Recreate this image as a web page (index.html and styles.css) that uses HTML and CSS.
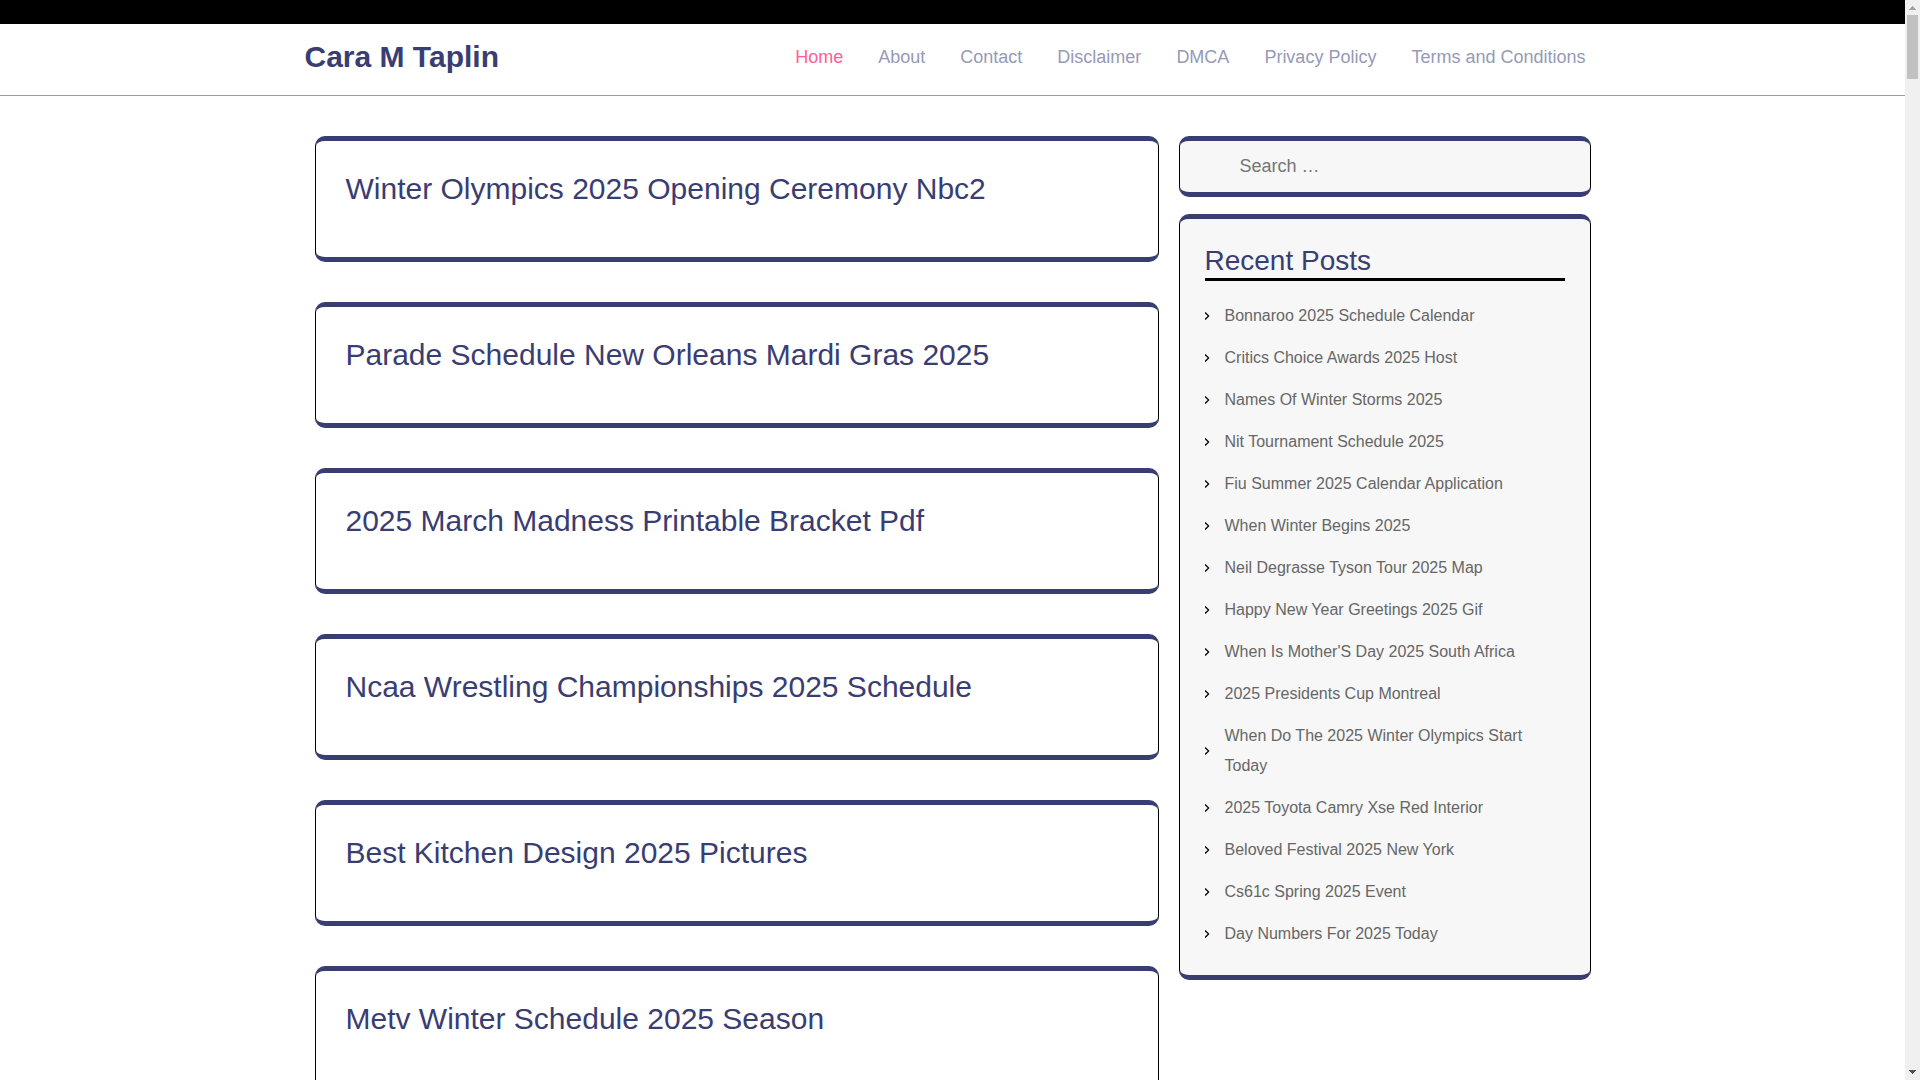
FILE: index.html
```html
<!DOCTYPE html>
<html lang="en">
<head>
    <meta charset="UTF-8">
    <meta name="viewport" content="width=device-width, initial-scale=1.0">
    <title>Cara M Taplin</title>
    <link rel="stylesheet" href="styles.css">
</head>
<body>
    <div class="page">
        <div class="topbar"></div>
        <header class="header">
            <div class="container header-inner">
                <a class="logo" href="#">Cara M Taplin</a>
                <nav class="menu">
                    <a class="active" href="#">Home</a>
                    <a href="#">About</a>
                    <a href="#">Contact</a>
                    <a href="#">Disclaimer</a>
                    <a href="#">DMCA</a>
                    <a href="#">Privacy Policy</a>
                    <a href="#">Terms and Conditions</a>
                </nav>
            </div>
        </header>
        <div class="container content">
            <main class="posts">
                <article class="box post"><h2><a href="#">Winter Olympics 2025 Opening Ceremony Nbc2</a></h2></article>
                <article class="box post"><h2><a href="#">Parade Schedule New Orleans Mardi Gras 2025</a></h2></article>
                <article class="box post"><h2><a href="#">2025 March Madness Printable Bracket Pdf</a></h2></article>
                <article class="box post"><h2><a href="#">Ncaa Wrestling Championships 2025 Schedule</a></h2></article>
                <article class="box post"><h2><a href="#">Best Kitchen Design 2025 Pictures</a></h2></article>
                <article class="box post"><h2><a href="#">Metv Winter Schedule 2025 Season</a></h2></article>
            </main>
            <aside class="sidebar">
                <form class="box search">
                    <input type="search" placeholder="Search …" aria-label="Search for:">
                </form>
                <section class="box recent">
                    <h2>Recent Posts</h2>
                    <ul>
                        <li><a href="#">Bonnaroo 2025 Schedule Calendar</a></li>
                        <li><a href="#">Critics Choice Awards 2025 Host</a></li>
                        <li><a href="#">Names Of Winter Storms 2025</a></li>
                        <li><a href="#">Nit Tournament Schedule 2025</a></li>
                        <li><a href="#">Fiu Summer 2025 Calendar Application</a></li>
                        <li><a href="#">When Winter Begins 2025</a></li>
                        <li><a href="#">Neil Degrasse Tyson Tour 2025 Map</a></li>
                        <li><a href="#">Happy New Year Greetings 2025 Gif</a></li>
                        <li><a href="#">When Is Mother'S Day 2025 South Africa</a></li>
                        <li><a href="#">2025 Presidents Cup Montreal</a></li>
                        <li><a href="#">When Do The 2025 Winter Olympics Start Today</a></li>
                        <li><a href="#">2025 Toyota Camry Xse Red Interior</a></li>
                        <li><a href="#">Beloved Festival 2025 New York</a></li>
                        <li><a href="#">Cs61c Spring 2025 Event</a></li>
                        <li><a href="#">Day Numbers For 2025 Today</a></li>
                    </ul>
                </section>
            </aside>
        </div>
    </div>
    <div class="scrollbar" aria-hidden="true">
        <svg width="15" height="15" viewBox="0 0 15 15" shape-rendering="crispEdges"><path fill="#a3a3a3" d="M7 6h1v1h1v1h1v1h1v1H4V9h1V8h1V7h1z"/></svg>
        <div class="thumb"></div>
        <svg width="15" height="15" viewBox="0 0 15 15" shape-rendering="crispEdges"><path fill="#505050" d="M4 5h7v1h-1v1H9v1H8v1H7V8H6V7H5V6H4z"/></svg>
    </div>
</body>
</html>
```

FILE: styles.css
```css
* {
    margin: 0;
    padding: 0;
    box-sizing: border-box;
}
body {
    display: flex;
    height: 100vh;
    overflow: hidden;
    font-family: "Liberation Sans", Arial, sans-serif;
    font-size: 16px;
    line-height: 30px;
    color: #666;
    background: #fff;
}
a {
    color: inherit;
    text-decoration: none;
}
.page {
    flex: 1;
    min-width: 0;
    overflow: hidden;
}
.container {
    max-width: 1320px;
    margin: 0 auto;
    padding: 0 12px;
}

/* header */
.topbar {
    height: 24px;
    background: #000;
}
.header {
    border-bottom: 1px solid #969ab6;
}
.header-inner {
    display: flex;
    justify-content: space-between;
    align-items: center;
    padding-top: 13px;
    padding-bottom: 18px;
}
.logo {
    font-size: 30px;
    line-height: 40px;
    font-weight: bold;
    color: #393d72;
}
.menu {
    display: flex;
    gap: 35px;
    padding-right: 15px;
    font-size: 18px;
    color: #969ab6;
}
.menu .active {
    color: #ff5e94;
}

/* posts and sidebar */
.content {
    display: flex;
    padding-top: 40px;
}
.box {
    border: 1px solid #000;
    border-top: 5px solid #393d72;
    border-bottom: 5px solid #393d72;
    border-radius: 10px;
}
.posts {
    width: calc(100% * 2 / 3);
    padding: 0 10px;
}
.post {
    padding: 30px 30px 50px;
    margin-bottom: 40px;
}
.post h2 {
    font-size: 30px;
    line-height: 36px;
    font-weight: normal;
    color: #393d72;
}
.sidebar {
    width: calc(100% / 3);
    padding: 0 10px;
}
.search,
.recent {
    background: #f7f7f7;
}
.search {
    margin-bottom: 17px;
}
.search input {
    display: block;
    width: 100%;
    height: 51px;
    padding: 0 60px;
    border: none;
    outline: none;
    background: none;
    font-family: inherit;
    font-size: 18px;
    color: #666;
    appearance: none;
}
.search input::placeholder {
    color: #757575;
}
.recent {
    padding: 20px 25px;
}
.recent h2 {
    margin-bottom: 14px;
    padding-top: 4px;
    border-bottom: 3px solid #000;
    font-size: 28px;
    line-height: 35px;
    font-weight: normal;
    color: #393d72;
}
.recent ul {
    list-style: none;
}
.recent li {
    display: flex;
    align-items: center;
    padding: 6px 0;
}
.recent li::before {
    content: "";
    flex: none;
    width: 5px;
    height: 8px;
    margin-right: 15px;
    background: #000;
    clip-path: polygon(0 12%, 20% 0, 100% 50%, 20% 100%, 0 88%, 65% 50%);
}

.scrollbar {
    display: flex;
    flex-direction: column;
    width: 15px;
    background: #f0f0f0;
}
.thumb {
    height: 64px;
    margin: 0 2px auto;
    background: #c1c1c1;
}
```
